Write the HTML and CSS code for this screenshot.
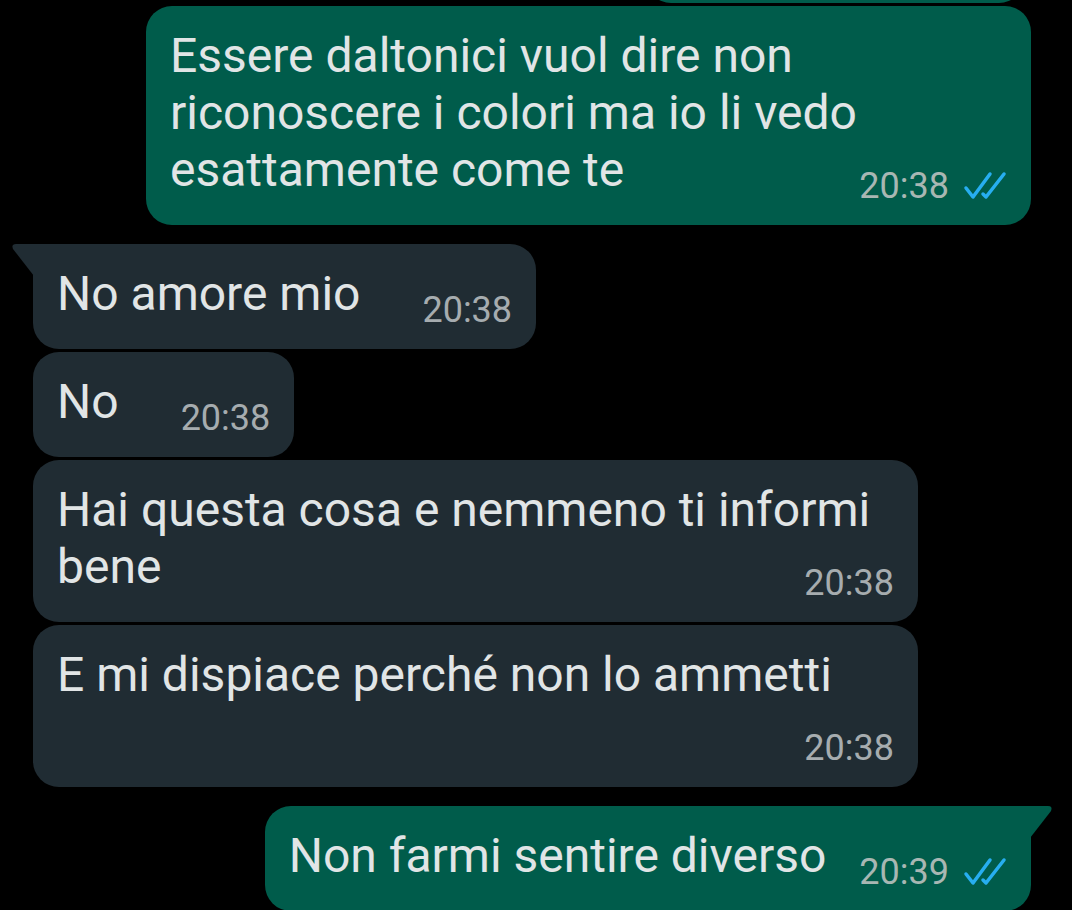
FILE: index.html
```html
<!DOCTYPE html>
<html lang="it">
<head>
  <meta charset="UTF-8">
  <meta name="viewport" content="width=device-width, initial-scale=1.0">
  <title>Chat</title>
  <link rel="stylesheet" href="styles.css">
</head>
<body>
  <main class="chat">
    <div class="msg out stub"></div>

    <div class="msg out next">
      <span class="text">Essere daltonici vuol dire non riconoscere i colori ma io li vedo esattamente come te</span><span class="meta"><span class="time">20:38</span><svg class="ticks" viewBox="0 0 44 30"><path d="M3 17 L10 26 L27 3"/><path d="M20 23 L23 26 L41 3"/></svg></span>
    </div>

    <div class="msg in first tail">
      <span class="text">No amore mio</span><span class="meta"><span class="time">20:38</span></span>
    </div>
    <div class="msg in next">
      <span class="text">No</span><span class="meta"><span class="time">20:38</span></span>
    </div>
    <div class="msg in next">
      <span class="text">Hai questa cosa e nemmeno ti informi bene</span><span class="meta"><span class="time">20:38</span></span>
    </div>
    <div class="msg in next">
      <span class="text">E mi dispiace perché non lo ammetti</span><span class="meta"><span class="time">20:38</span></span>
    </div>

    <div class="msg out first tail">
      <span class="text">Non farmi sentire diverso</span><span class="meta"><span class="time">20:39</span><svg class="ticks" viewBox="0 0 44 30"><path d="M3 17 L10 26 L27 3"/><path d="M20 23 L23 26 L41 3"/></svg></span>
    </div>
  </main>
</body>
</html>
```

FILE: styles.css
```css
*, *::before, *::after {
  box-sizing: border-box;
}

body {
  margin: 0;
  background: #000;
  font-family: Roboto, "Noto Sans", sans-serif;
  color: #e1e5e6;
  overflow: hidden;
}

.chat {
  display: flex;
  flex-direction: column;
  padding: 0 41px 0 33px;
}

.msg {
  position: relative;
  display: flow-root;
  max-width: 885px;
  padding: 21px 24px 18px;
  border-radius: 26px;
}

.msg.in {
  align-self: flex-start;
  background: #202c33;
}

.msg.out {
  align-self: flex-end;
  background: #005c4b;
}

.msg.first {
  margin-top: 19px;
}

.msg.next {
  margin-top: 3px;
}

/* pezzo del messaggio precedente tagliato in alto */
.stub {
  width: 378px;
  height: 50px;
  margin-top: -47px;
  margin-right: 7px;
  padding: 0;
}

.msg.stub + .next {
  margin-top: 3px;
}

.text {
  font-size: 48px;
  line-height: 57px;
}

.meta {
  float: right;
  display: flex;
  align-items: center;
  gap: 14px;
  margin: 24px 0 0 62px;
  font-size: 36px;
  line-height: 42px;
}

.out .meta {
  margin-left: 33px;
}

.in .time {
  color: #a6acaf;
}

.out .time {
  color: #a8b7b3;
}

.ticks {
  width: 44px;
  height: 30px;
  fill: none;
  stroke: #27aef0;
  stroke-width: 3.5;
  stroke-linecap: round;
  stroke-linejoin: round;
}

/* codine delle bolle */
.msg.in.tail {
  border-top-left-radius: 0;
}

.msg.out.tail {
  border-top-right-radius: 0;
}

.msg.tail::before {
  content: "";
  position: absolute;
  top: 0;
  width: 22px;
  height: 32px;
  background: inherit;
}

.msg.in.tail::before {
  left: -21px;
  clip-path: path('M4 0 H22 V32 L1 5 Q-1 0 4 0 Z');
}

.msg.out.tail::before {
  right: -21px;
  clip-path: path('M18 0 H0 V32 L21 5 Q23 0 18 0 Z');
}
```
